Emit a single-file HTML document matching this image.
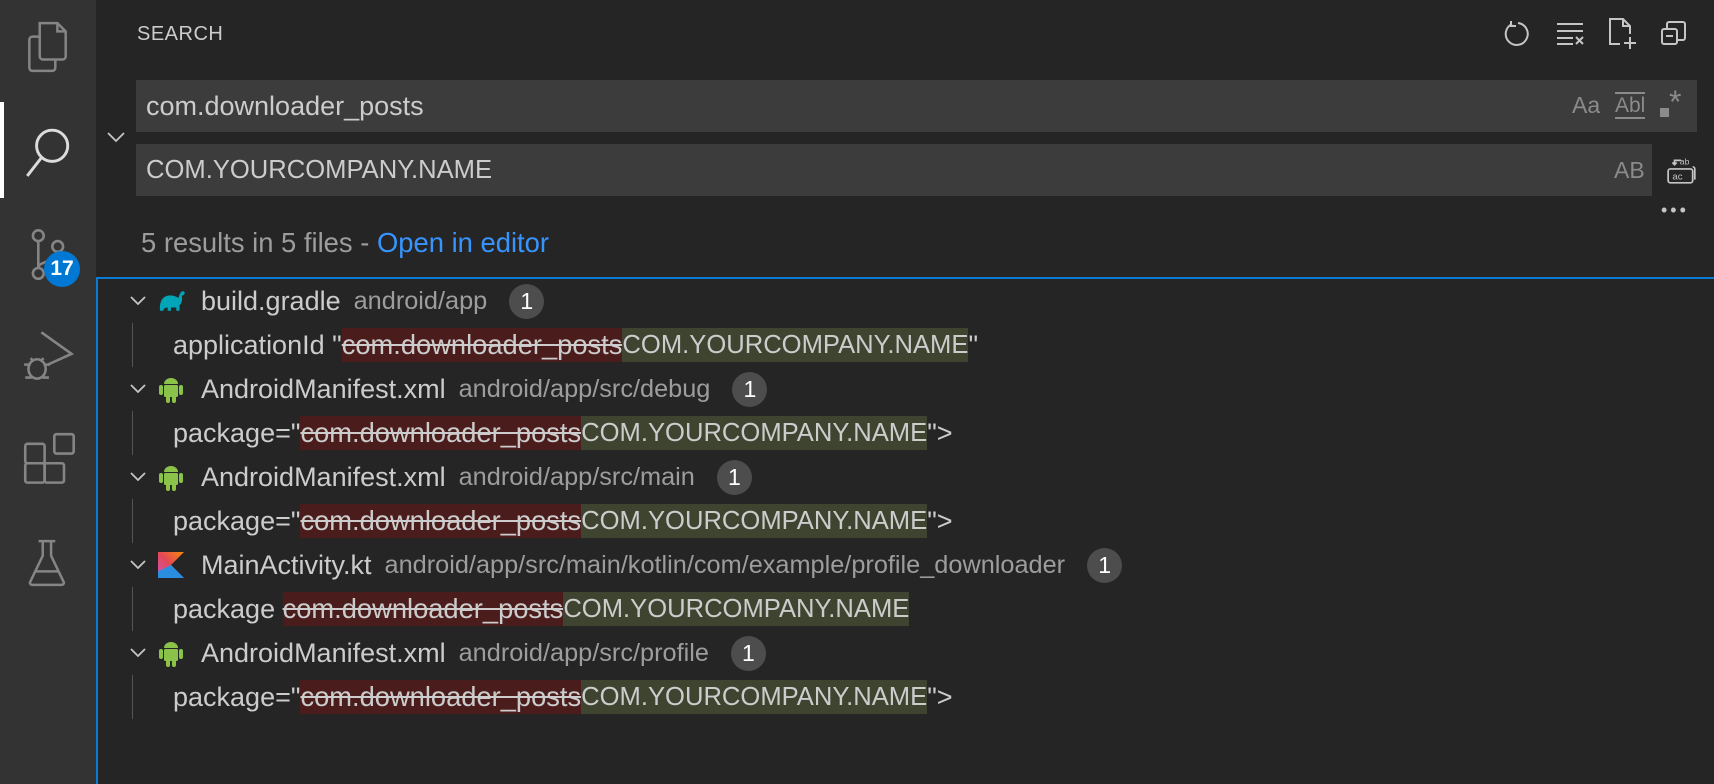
<!DOCTYPE html>
<html><head><meta charset="utf-8"><style>
*{margin:0;padding:0;box-sizing:border-box}
body{width:1714px;height:784px;background:#252526;font-family:"Liberation Sans",sans-serif;position:relative;overflow:hidden;color:#cccccc}
.ab{position:absolute;left:0;top:0;width:96px;height:784px;background:#333333}
.abs{position:absolute}
.inp{position:absolute;background:#3c3c3c;color:#cccccc;font-size:27px;padding-left:10px;display:flex;align-items:center}
.tree{position:absolute;left:96px;top:277px;width:1618px;height:507px;border-left:2px solid #0a7bd4;border-top:2px solid #0a7bd4}
.row{position:absolute;left:0;width:1600px;height:44px;font-size:27px;white-space:nowrap}
.chev{position:absolute;left:30px;top:15px}
.ficon{position:absolute;left:60px;top:8px}
.fn{position:absolute;left:103px;top:0;color:#cccccc;display:flex;align-items:center;height:44px}
.path{color:#9d9d9d;font-size:25.3px;margin-left:13px}
.badge{display:inline-block;width:35px;height:35px;border-radius:18px;background:#4d4d4d;color:#fff;font-size:23px;text-align:center;line-height:35px;margin-left:22px}
.match{position:absolute;left:75px;top:0;height:44px;display:flex;align-items:center;color:#cccccc}
.del{background:#4b1c1c;text-decoration:line-through;height:34px;line-height:34px;display:inline-block;font-size:27.3px}
.ins{background:#3e4430;height:34px;line-height:34px;display:inline-block;font-size:25.6px}
.guide{position:absolute;left:34px;top:0;width:1px;height:44px;background:#555}
</style></head><body>
<div class="ab">
<div class="abs" style="left:0;top:102px;width:4px;height:96px;background:#fff"></div>
<svg class="abs" style="left:22px;top:20px" width="50" height="54" viewBox="0 0 48 52" fill="none" stroke="#858585" stroke-width="2.4">
<path d="M17 3h17l8 8v24a3 3 0 0 1-3 3H20a3 3 0 0 1-3-3z"/><path d="M34 3v8h8"/><path d="M17 16h-7a3 3 0 0 0-3 3v27a3 3 0 0 0 3 3h19a3 3 0 0 0 3-3v-8"/></svg>
<svg class="abs" style="left:22px;top:124px" width="52" height="54" viewBox="0 0 48 52" fill="none" stroke="#dcdcdc" stroke-width="2.8">
<circle cx="28" cy="21" r="15"/><path d="M18 32L4 50"/></svg>
<svg class="abs" style="left:26px;top:226px" width="44" height="56" viewBox="0 0 40 52" fill="none" stroke="#858585" stroke-width="2.4">
<circle cx="11" cy="9" r="5"/><circle cx="29" cy="19" r="5"/><circle cx="11" cy="44" r="5"/><path d="M11 14v25M29 24c0 10-18 8-18 15"/></svg>
<div class="abs" style="left:44px;top:251px;width:36px;height:36px;border-radius:18px;background:#0078d4;color:#fff;font-size:21px;font-weight:bold;text-align:center;line-height:36px">17</div>
<svg class="abs" style="left:22px;top:328px" width="56" height="56" viewBox="0 0 52 52" fill="none" stroke="#858585" stroke-width="2.4">
<path d="M18 4l28 20-22 10"/><ellipse cx="14" cy="38" rx="8" ry="9"/><path d="M2 34h6M20 34h6M3 46h6M19 46h6M8 28l3 3M20 28l-3 3"/></svg>
<svg class="abs" style="left:22px;top:432px" width="56" height="56" viewBox="0 0 52 52" fill="none" stroke="#858585" stroke-width="2.4">
<rect x="3" y="11" width="18" height="18" rx="2"/><rect x="3" y="29" width="18" height="18" rx="2"/><rect x="21" y="29" width="18" height="18" rx="2"/><rect x="30" y="2" width="18" height="18" rx="2"/></svg>
<svg class="abs" style="left:26px;top:538px" width="46" height="50" viewBox="0 0 44 48" fill="none" stroke="#858585" stroke-width="2.4">
<path d="M12 3h16M16 3v14L4 42a2 2 0 0 0 2 3h28a2 2 0 0 0 2-3L24 17V3M9 32h22"/></svg>
</div>

<div class="abs" style="left:137px;top:23px;font-size:20px;color:#cccccc;letter-spacing:0.5px">SEARCH</div>
<svg class="abs" style="left:1504px;top:19px" width="28" height="30" viewBox="0 0 28 28" fill="none" stroke="#c5c5c5" stroke-width="2"><path d="M8 4a11 11 0 1 0 6 -1"/><path d="M7 1v5h5"/></svg>
<svg class="abs" style="left:1555px;top:22px" width="32" height="24" viewBox="0 0 32 24" fill="none" stroke="#c5c5c5" stroke-width="2"><path d="M2 2h26M2 9h26M2 16h16M2 22h16M21 15l7 7M28 15l-7 7"/></svg>
<svg class="abs" style="left:1608px;top:17px" width="30" height="34" viewBox="0 0 30 34" fill="none" stroke="#c5c5c5" stroke-width="2"><path d="M12 27H2V2h13l7 7v8M15 2v7h7M22 20v12M16 26h12"/></svg>
<svg class="abs" style="left:1660px;top:20px" width="28" height="26" viewBox="0 0 28 26" fill="none" stroke="#c5c5c5" stroke-width="2"><rect x="2" y="9" width="15" height="15" rx="2"/><path d="M7 9V4a2 2 0 0 1 2-2h14a2 2 0 0 1 2 2v14a2 2 0 0 1-2 2h-6M6 16h7"/></svg>

<svg class="abs" style="left:106px;top:130px" width="20" height="14" viewBox="0 0 20 14" fill="none" stroke="#c5c5c5" stroke-width="1.8"><path d="M2 3l8 8 8-8"/></svg>
<div class="inp" style="left:136px;top:80px;width:1561px;height:52px">com.downloader_posts</div>
<div class="abs" style="left:1572px;top:92px;font-size:23px;color:#8b8b8b">Aa</div>
<div class="abs" style="left:1615px;top:92px;font-size:21px;color:#8b8b8b;border-top:2px solid #8b8b8b;border-bottom:2px solid #8b8b8b;line-height:23px">Abl</div>
<div class="abs" style="left:1660px;top:108px;width:9px;height:9px;background:#8b8b8b"></div>
<div class="abs" style="left:1669px;top:84px;font-size:32px;color:#8b8b8b">*</div>
<div class="inp" style="left:136px;top:144px;width:1516px;height:52px;font-size:25.6px">COM.YOURCOMPANY.NAME</div>
<div class="abs" style="left:1614px;top:157px;font-size:23px;color:#8b8b8b">AB</div>
<svg class="abs" style="left:1666px;top:154px" width="32" height="32" viewBox="0 0 30 28" fill="none" stroke="#c5c5c5" stroke-width="1.6"><rect x="2" y="13" width="23" height="13" rx="2"/><path d="M25 11a2 2 0 0 1 2 2v10"/><path d="M8 9V5h6M6 7l2 2 2-2"/><text x="13" y="9" font-size="8" fill="#c5c5c5" stroke="none" font-family="Liberation Sans">ab</text><text x="6" y="23" font-size="9" fill="#c5c5c5" stroke="none" font-family="Liberation Sans">ac</text></svg>
<div class="abs" style="left:1661px;top:200px;font-size:18px;color:#c5c5c5;letter-spacing:3px">•••</div>

<div class="abs" style="left:141px;top:227px;font-size:27.4px;color:#9d9d9d">5 results in 5 files - <span style="color:#3794ff">Open in editor</span></div>

<div class="tree">
<div class="row" style="top:0">
<svg class="chev" width="20" height="14" viewBox="0 0 18 14" fill="none" stroke="#c5c5c5" stroke-width="1.8"><path d="M2 3l7 7 7-7"/></svg>
<svg class="ficon" width="28" height="26" viewBox="0 0 26 24"><path d="M2 22c-1-6 1-13 7-14 4-1 8 1 10 2 1-3 2-7 5-6 2 1 0 4-2 4 1 3 0 7-2 9v5h-3v-3h-5v3H9v-3c-2 0-4 1-4 3z" fill="#02a4b8"/></svg>
<div class="fn">build.gradle<span class="path">android/app</span><span class="badge">1</span></div>
</div>
<div class="row" style="top:44px"><div class="guide"></div><div class="match">applicationId "<span class="del">com.downloader_posts</span><span class="ins">COM.YOURCOMPANY.NAME</span>"</div></div>
<div class="row" style="top:88px">
<svg class="chev" width="20" height="14" viewBox="0 0 18 14" fill="none" stroke="#c5c5c5" stroke-width="1.8"><path d="M2 3l7 7 7-7"/></svg>
<svg class="ficon" width="26" height="30" viewBox="0 0 26 30" fill="#8bc34a"><path d="M6 9a7 6 0 0 1 14 0z"/><rect x="6" y="10" width="14" height="12" rx="1.5"/><rect x="1" y="10" width="4" height="10" rx="2"/><rect x="21" y="10" width="4" height="10" rx="2"/><rect x="8" y="20" width="4" height="8" rx="2"/><rect x="14" y="20" width="4" height="8" rx="2"/></svg>
<div class="fn">AndroidManifest.xml<span class="path">android/app/src/debug</span><span class="badge">1</span></div>
</div>
<div class="row" style="top:132px"><div class="guide"></div><div class="match">package="<span class="del">com.downloader_posts</span><span class="ins">COM.YOURCOMPANY.NAME</span>"&gt;</div></div>
<div class="row" style="top:176px">
<svg class="chev" width="20" height="14" viewBox="0 0 18 14" fill="none" stroke="#c5c5c5" stroke-width="1.8"><path d="M2 3l7 7 7-7"/></svg>
<svg class="ficon" width="26" height="30" viewBox="0 0 26 30" fill="#8bc34a"><path d="M6 9a7 6 0 0 1 14 0z"/><rect x="6" y="10" width="14" height="12" rx="1.5"/><rect x="1" y="10" width="4" height="10" rx="2"/><rect x="21" y="10" width="4" height="10" rx="2"/><rect x="8" y="20" width="4" height="8" rx="2"/><rect x="14" y="20" width="4" height="8" rx="2"/></svg>
<div class="fn">AndroidManifest.xml<span class="path">android/app/src/main</span><span class="badge">1</span></div>
</div>
<div class="row" style="top:220px"><div class="guide"></div><div class="match">package="<span class="del">com.downloader_posts</span><span class="ins">COM.YOURCOMPANY.NAME</span>"&gt;</div></div>
<div class="row" style="top:264px">
<svg class="chev" width="20" height="14" viewBox="0 0 18 14" fill="none" stroke="#c5c5c5" stroke-width="1.8"><path d="M2 3l7 7 7-7"/></svg>
<svg class="ficon" width="26" height="26" viewBox="0 0 24 24" style="top:9px"><defs><linearGradient id="k" x1="0" y1="1" x2="1" y2="0"><stop offset="0" stop-color="#c757bc"/><stop offset="0.5" stop-color="#e44857"/><stop offset="1" stop-color="#f88909"/></linearGradient></defs><path d="M0 0h24L12 12 24 24H0z" fill="url(#k)"/><path d="M12 12L24 24H0V18z" fill="#2a8ee0"/></svg>
<div class="fn">MainActivity.kt<span class="path">android/app/src/main/kotlin/com/example/profile_downloader</span><span class="badge">1</span></div>
</div>
<div class="row" style="top:308px"><div class="guide"></div><div class="match">package&nbsp;<span class="del">com.downloader_posts</span><span class="ins">COM.YOURCOMPANY.NAME</span></div></div>
<div class="row" style="top:352px">
<svg class="chev" width="20" height="14" viewBox="0 0 18 14" fill="none" stroke="#c5c5c5" stroke-width="1.8"><path d="M2 3l7 7 7-7"/></svg>
<svg class="ficon" width="26" height="30" viewBox="0 0 26 30" fill="#8bc34a"><path d="M6 9a7 6 0 0 1 14 0z"/><rect x="6" y="10" width="14" height="12" rx="1.5"/><rect x="1" y="10" width="4" height="10" rx="2"/><rect x="21" y="10" width="4" height="10" rx="2"/><rect x="8" y="20" width="4" height="8" rx="2"/><rect x="14" y="20" width="4" height="8" rx="2"/></svg>
<div class="fn">AndroidManifest.xml<span class="path">android/app/src/profile</span><span class="badge">1</span></div>
</div>
<div class="row" style="top:396px"><div class="guide"></div><div class="match">package="<span class="del">com.downloader_posts</span><span class="ins">COM.YOURCOMPANY.NAME</span>"&gt;</div></div>
</div>
</body></html>
